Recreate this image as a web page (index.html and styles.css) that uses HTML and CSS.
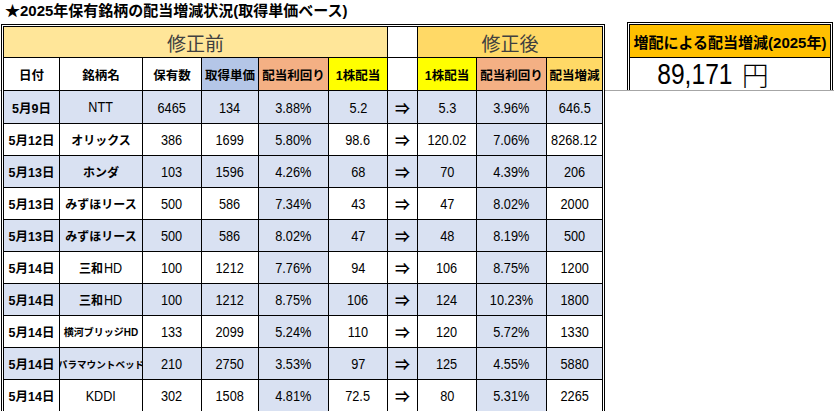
FILE: index.html
```html
<!DOCTYPE html>
<html lang="ja">
<head>
<meta charset="utf-8">
<title>配当増減状況</title>
<link rel="stylesheet" href="styles.css">
</head>
<body>
<div class="title">★2025年保有銘柄の配当増減状況(取得単価ベース)</div>
<div class="layout">
  <div class="sheet">
    <div class="grid">
      <div class="c sec before">修正前</div>
      <div class="c"></div>
      <div class="c sec after">修正後</div>

      <div class="c hd">日付</div>
      <div class="c hd">銘柄名</div>
      <div class="c hd">保有数</div>
      <div class="c hd blue">取得単価</div>
      <div class="c hd orange">配当利回り</div>
      <div class="c hd yellow">1株配当</div>
      <div class="c hd"></div>
      <div class="c hd yellow">1株配当</div>
      <div class="c hd orange">配当利回り</div>
      <div class="c hd gold">配当増減</div>

      <!-- row 1 -->
      <div class="c d band">5月9日</div><div class="c n band"><span class="num">NTT</span></div><div class="c v band"><span>6465</span></div><div class="c v band"><span>134</span></div><div class="c v band"><span>3.88%</span></div><div class="c v band"><span>5.2</span></div><div class="c a band">⇒</div><div class="c v band"><span>5.3</span></div><div class="c v band"><span>3.96%</span></div><div class="c v band"><span>646.5</span></div>
      <!-- row 2 -->
      <div class="c d">5月12日</div><div class="c n">オリックス</div><div class="c v"><span>386</span></div><div class="c v"><span>1699</span></div><div class="c v band"><span>5.80%</span></div><div class="c v"><span>98.6</span></div><div class="c a">⇒</div><div class="c v"><span>120.02</span></div><div class="c v band"><span>7.06%</span></div><div class="c v"><span>8268.12</span></div>
      <!-- row 3 -->
      <div class="c d band">5月13日</div><div class="c n band">ホンダ</div><div class="c v band"><span>103</span></div><div class="c v band"><span>1596</span></div><div class="c v band"><span>4.26%</span></div><div class="c v band"><span>68</span></div><div class="c a band">⇒</div><div class="c v band"><span>70</span></div><div class="c v band"><span>4.39%</span></div><div class="c v band"><span>206</span></div>
      <!-- row 4 -->
      <div class="c d">5月13日</div><div class="c n">みずほリース</div><div class="c v"><span>500</span></div><div class="c v"><span>586</span></div><div class="c v band"><span>7.34%</span></div><div class="c v"><span>43</span></div><div class="c a">⇒</div><div class="c v"><span>47</span></div><div class="c v band"><span>8.02%</span></div><div class="c v"><span>2000</span></div>
      <!-- row 5 -->
      <div class="c d band">5月13日</div><div class="c n band">みずほリース</div><div class="c v band"><span>500</span></div><div class="c v band"><span>586</span></div><div class="c v band"><span>8.02%</span></div><div class="c v band"><span>47</span></div><div class="c a band">⇒</div><div class="c v band"><span>48</span></div><div class="c v band"><span>8.19%</span></div><div class="c v band"><span>500</span></div>
      <!-- row 6 -->
      <div class="c d">5月14日</div><div class="c n">三和<span class="num">HD</span></div><div class="c v"><span>100</span></div><div class="c v"><span>1212</span></div><div class="c v band"><span>7.76%</span></div><div class="c v"><span>94</span></div><div class="c a">⇒</div><div class="c v"><span>106</span></div><div class="c v band"><span>8.75%</span></div><div class="c v"><span>1200</span></div>
      <!-- row 7 -->
      <div class="c d band">5月14日</div><div class="c n band">三和<span class="num">HD</span></div><div class="c v band"><span>100</span></div><div class="c v band"><span>1212</span></div><div class="c v band"><span>8.75%</span></div><div class="c v band"><span>106</span></div><div class="c a band">⇒</div><div class="c v band"><span>124</span></div><div class="c v band"><span>10.23%</span></div><div class="c v band"><span>1800</span></div>
      <!-- row 8 -->
      <div class="c d">5月14日</div><div class="c n small">横河ブリッジHD</div><div class="c v"><span>133</span></div><div class="c v"><span>2099</span></div><div class="c v band"><span>5.24%</span></div><div class="c v"><span>110</span></div><div class="c a">⇒</div><div class="c v"><span>120</span></div><div class="c v band"><span>5.72%</span></div><div class="c v"><span>1330</span></div>
      <!-- row 9 -->
      <div class="c d band">5月14日</div><div class="c n tiny band">パラマウントベッド</div><div class="c v band"><span>210</span></div><div class="c v band"><span>2750</span></div><div class="c v band"><span>3.53%</span></div><div class="c v band"><span>97</span></div><div class="c a band">⇒</div><div class="c v band"><span>125</span></div><div class="c v band"><span>4.55%</span></div><div class="c v band"><span>5880</span></div>
      <!-- row 10 -->
      <div class="c d">5月14日</div><div class="c n"><span class="num">KDDI</span></div><div class="c v"><span>302</span></div><div class="c v"><span>1508</span></div><div class="c v band"><span>4.81%</span></div><div class="c v"><span>72.5</span></div><div class="c a">⇒</div><div class="c v"><span>80</span></div><div class="c v band"><span>5.31%</span></div><div class="c v"><span>2265</span></div>
    </div>
  </div>

  <div class="summary">
    <div class="summary-inner">
      <div class="summary-head">増配による配当増減(2025年)</div>
      <div class="summary-value"><span class="amount">89,171</span><span class="yen">円</span></div>
    </div>
  </div>
</div>
</body>
</html>
```

FILE: styles.css
```css
html, body {
  margin: 0;
  padding: 0;
}
body {
  width: 834px;
  height: 411px;
  overflow: hidden;
  background: #ffffff linear-gradient(#a6a6a6, #a6a6a6) 0 90px / 100% 1px no-repeat;
  font-family: "Liberation Sans", "Noto Sans CJK JP", sans-serif;
  color: #000;
}
.title {
  height: 22px;
  line-height: 22px;
  padding-left: 5px;
  font-size: 15px;
  font-weight: bold;
  font-family: "Liberation Sans", "Noto Sans CJK JP", sans-serif;
  white-space: nowrap;
}
.layout {
  display: flex;
  align-items: flex-start;
}
.sheet {
  margin-left: 1px;
  margin-top: 2px;
  border: 1px solid #000;
  padding: 1px;
  background: #fff;
}
.grid {
  display: grid;
  grid-template-columns: 55px 82px 58px 56px 69px 58px 29px 58px 69px 55px;
  grid-template-rows: 30px 32px 32px repeat(9, 31px);
  gap: 1px;
  padding: 1px;
  background: #000;
}
.c {
  background: #fff;
  display: flex;
  align-items: center;
  justify-content: center;
  overflow: hidden;
  white-space: nowrap;
  font-size: 12px;
}
.sec {
  grid-column: span 6;
  font-family: "Noto Sans CJK JP", sans-serif;
  font-size: 19px;
  color: #404040;
  font-weight: 400;
}
.sec.after {
  grid-column: span 3;
}
.before { background: #ffe699; }
.after { background: #ffd966; }
.hd {
  font-weight: bold;
  font-size: 12.5px;
}
.blue { background: #b4c6e7; }
.orange { background: #f4b084; }
.yellow { background: #ffff00; }
.gold { background: #ffd966; }
.band { background: #d9e1f2; }
.d {
  font-weight: bold;
  font-size: 12.5px;
}
.n {
  font-weight: bold;
  font-size: 12px;
}
.n .num {
  font-weight: normal;
  display: inline-block;
  font-size: 14px;
  transform: scaleX(0.9);
}
.n.small {
  font-size: 10px;
}
.n.tiny {
  font-size: 9.6px;
}
.v {
  font-family: "Liberation Sans", sans-serif;
  font-size: 15px;
}
.v span {
  display: inline-block;
  transform: scaleX(0.85);
}
.a {
  font-family: "Noto Sans CJK JP", sans-serif;
  font-weight: bold;
  font-size: 15px;
}
.summary {
  margin-left: 22px;
  border: 1px solid #000;
  border-bottom: none;
  padding: 1px 1px 0;
  background: #fff;
}
.summary-inner {
  width: 200px;
  border: 1px solid #000;
  border-bottom: none;
  display: flex;
  flex-direction: column;
  background: #000;
  gap: 1px;
}
.summary-head {
  height: 32px;
  background: #ffc000;
  display: flex;
  align-items: center;
  justify-content: center;
  font-weight: bold;
  font-size: 15px;
  white-space: nowrap;
}
.summary-value {
  height: 32px;
  background: #fff;
  display: flex;
  align-items: center;
  padding-left: 19px;
  white-space: nowrap;
}
.amount {
  font-family: "Liberation Sans", sans-serif;
  font-size: 30px;
  display: inline-block;
  transform: scaleX(0.82);
}
.yen {
  font-family: "Noto Sans CJK JP", sans-serif;
  font-size: 27px;
  font-weight: 300;
  margin-left: 1px;
}
```
